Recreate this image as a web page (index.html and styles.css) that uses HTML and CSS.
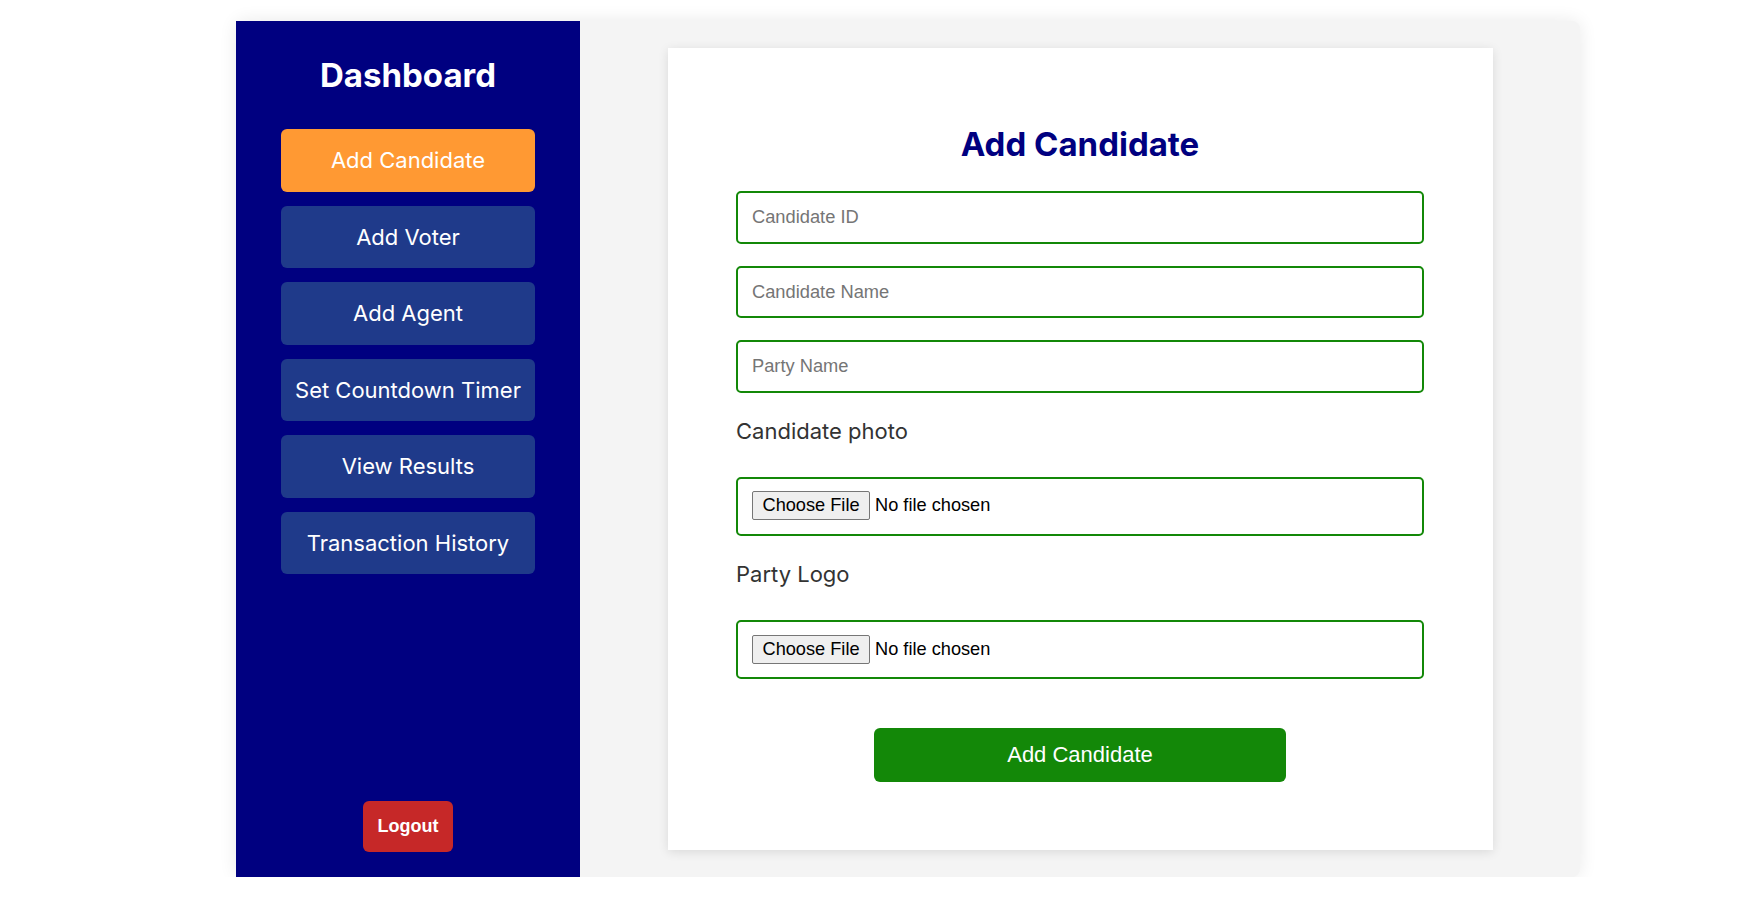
FILE: index.html
```html
<!DOCTYPE html>
<html lang="en">
<head>
<meta charset="utf-8">
<title>Dashboard - Add Candidate</title>
<link rel="stylesheet" href="styles.css">
</head>
<body>
<div class="container">
  <aside class="sidebar">
    <h2 class="sidebar-title">Dashboard</h2>
    <nav class="nav">
      <button class="nav-btn active">Add Candidate</button>
      <button class="nav-btn">Add Voter</button>
      <button class="nav-btn">Add Agent</button>
      <button class="nav-btn">Set Countdown Timer</button>
      <button class="nav-btn">View Results</button>
      <button class="nav-btn">Transaction History</button>
    </nav>
    <button class="logout-btn">Logout</button>
  </aside>
  <main class="main">
    <div class="card">
      <h2 class="card-title">Add Candidate</h2>
      <form class="form">
        <div class="text-fields">
          <input class="text-input" type="text" placeholder="Candidate ID">
          <input class="text-input" type="text" placeholder="Candidate Name">
          <input class="text-input" type="text" placeholder="Party Name">
        </div>
        <label class="field-label">Candidate photo</label>
        <input class="file-input" type="file">
        <label class="field-label">Party Logo</label>
        <input class="file-input" type="file">
        <button type="button" class="submit-btn">Add Candidate</button>
      </form>
    </div>
  </main>
</div>
</body>
</html>
```
FILE: styles.css
```css
* { box-sizing: border-box; }

body {
  margin: 0;
  background: #ffffff;
  font-family: Inter, "Noto Sans", sans-serif;
}

.container {
  display: flex;
  width: 1344px;
  height: 856px;
  margin: 21px 0 0 236px;
  background: #f4f4f4;
  border-radius: 8px;
  box-shadow: 0 0 18px rgba(0, 0, 0, 0.09);
}

.sidebar {
  width: 344px;
  flex-shrink: 0;
  background: #000080;
  display: flex;
  flex-direction: column;
  align-items: center;
  padding: 34px 45px 25px;
}

.sidebar-title {
  margin: 0 0 34px;
  color: #ffffff;
  font-family: Inter, sans-serif;
  font-weight: 700;
  font-size: 33px;
  line-height: 40px;
}

.nav {
  width: 100%;
  display: flex;
  flex-direction: column;
  gap: 14px;
}

.nav-btn {
  width: 100%;
  height: 62.5px;
  border: none;
  border-radius: 6px;
  background: #1f3a8a;
  color: #ffffff;
  font-family: Inter, sans-serif;
  font-size: 22px;
  line-height: 26px;
  padding: 0;
  cursor: pointer;
}

.nav-btn.active {
  background: #ff9933;
}

.logout-btn {
  margin-top: auto;
  border: none;
  border-radius: 6px;
  background: #c62828;
  color: #ffffff;
  font-family: "Liberation Sans", Arial, sans-serif;
  font-weight: 700;
  font-size: 18px;
  line-height: 21px;
  padding: 15px 15px;
  cursor: pointer;
}

.main {
  flex: 1;
  display: flex;
  align-items: center;
  justify-content: center;
}

.card {
  width: 825px;
  height: 802px;
  background: #ffffff;
  box-shadow: 0 2px 10px rgba(0, 0, 0, 0.11);
  padding: 76px 68.5px 0;
}

.card-title {
  margin: 0 0 27px;
  text-align: center;
  color: #000080;
  font-family: Inter, sans-serif;
  font-weight: 700;
  font-size: 33px;
  line-height: 40px;
}

.form {
  display: flex;
  flex-direction: column;
}

.text-fields {
  display: flex;
  flex-direction: column;
  gap: 22px;
}

.text-input {
  width: 100%;
  height: 52.5px;
  margin: 0;
  padding: 0 14px;
  border: 2px solid #138808;
  border-radius: 5px;
  font-family: "Liberation Sans", Arial, sans-serif;
  font-size: 18.3px;
  color: #000;
  outline: none;
}

.text-input::placeholder {
  color: #757575;
}

.field-label {
  display: block;
  margin: 26px 0 33px;
  color: #333333;
  font-family: Inter, sans-serif;
  font-size: 22px;
  line-height: 25.4px;
}

.file-input {
  display: block;
  width: 100%;
  height: 59px;
  padding: 12.5px 14px;
  border: 2px solid #138808;
  border-radius: 5px;
  font-family: "Liberation Sans", Arial, sans-serif;
  font-size: 18.2px;
  color: #000;
}

.file-input::file-selector-button {
  font-family: "Liberation Sans", Arial, sans-serif;
  font-size: 18.2px;
  padding: 3px 9.5px;
  margin-right: 5px;
  border: 1px solid #767676;
  border-radius: 2px;
  background: #efefef;
  color: #000;
}

.submit-btn {
  align-self: center;
  width: 60%;
  height: 54px;
  margin-top: 48.5px;
  border: none;
  border-radius: 6px;
  background: #138808;
  color: #ffffff;
  font-family: "Liberation Sans", Arial, sans-serif;
  font-size: 22px;
  cursor: pointer;
}
```
